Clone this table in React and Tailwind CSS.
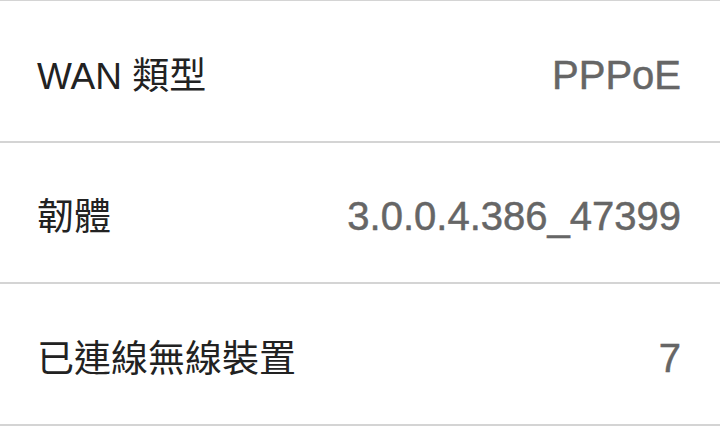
const rows = [
  { label: "WAN 類型", value: "PPPoE" },
  { label: "韌體", value: "3.0.0.4.386_47399" },
  { label: "已連線無線裝置", value: "7" },
];

export default function App() {
  return (
    <div
      className="w-[720px] h-[435px] bg-white overflow-hidden border-t-[1.5px] border-[#d4d4d4]"
      style={{ fontFamily: '"Liberation Sans", "Noto Sans CJK TC", sans-serif' }}
    >
      {rows.map((r) => (
        <div
          key={r.label}
          className="flex items-center h-[141.5px] pt-[8px] pl-[37px] pr-[39px] border-b-2 border-[#d4d4d4]"
        >
          <div className="flex flex-1 items-baseline justify-between">
            <span className="text-[37px] leading-none text-[#222222]">{r.label}</span>
            <span className="text-[40px] leading-none text-[#666666] [-webkit-text-stroke:0.5px_#666666]">
              {r.value}
            </span>
          </div>
        </div>
      ))}
    </div>
  );
}
